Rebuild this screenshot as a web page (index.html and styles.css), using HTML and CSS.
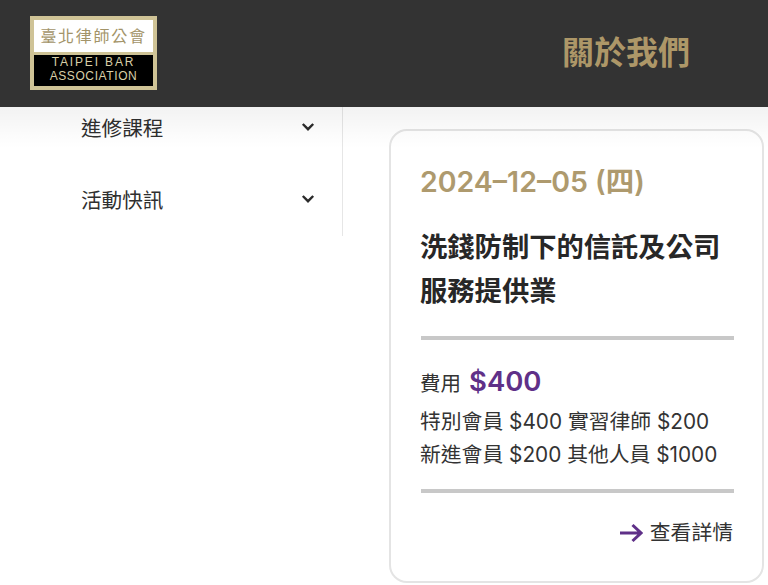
FILE: index.html
```html
<!DOCTYPE html>
<html lang="zh-Hant">
<head>
<meta charset="utf-8">
<title>臺北律師公會</title>
<link rel="stylesheet" href="styles.css">
</head>
<body>
<header class="site-header">
  <div class="logo">
    <div class="logo-top">臺北律師公會</div>
    <div class="logo-bottom"><span class="logo-l1">TAIPEI BAR</span><span class="logo-l2">ASSOCIATION</span></div>
  </div>
  <div class="page-title">關於我們</div>
</header>
<main class="main">
  <nav class="side">
    <div class="side-item"><span>進修課程</span>
      <svg class="chev" viewBox="0 0 14 10"><path d="M1.8 2 7 7.2 12.2 2"/></svg></div>
    <div class="side-item"><span>活動快訊</span>
      <svg class="chev" viewBox="0 0 14 10"><path d="M1.8 2 7 7.2 12.2 2"/></svg></div>
  </nav>
  <section class="content">
    <article class="card">
      <div class="date">2024–12–05 (四)</div>
      <h2 class="title">洗錢防制下的信託及公司服務提供業</h2>
      <div class="rule rule-a"></div>
      <div class="fee"><span class="fee-label">費用</span><span class="fee-value">$400</span></div>
      <div class="price price-first">特別會員 $400 實習律師 $200</div>
      <div class="price">新進會員 $200 其他人員 $1000</div>
      <div class="rule rule-b"></div>
      <div class="more">
        <svg class="arrow" viewBox="0 0 24 20"><path d="M1 10H22M13.5 2 22 10 13.5 18"/></svg>
        <span>查看詳情</span>
      </div>
    </article>
  </section>
</main>
</body>
</html>
```

FILE: styles.css
```css
* { box-sizing: border-box; }
html, body { margin: 0; height: 585px; overflow: hidden; background: #fff; }
body { font-family: Inter, "Noto Sans CJK TC", sans-serif; color: #2b2b2b; }

.site-header {
  height: 107px;
  background: #333333;
  display: flex;
  align-items: flex-start;
  padding: 16px 0 0 30px;
}
.logo {
  width: 127px;
  height: 74px;
  border: 4px solid #cfc396;
  display: flex;
  flex-direction: column;
}
.logo-top {
  height: 35px;
  background: #fff;
  color: #a39469;
  font: 16px/31px "Noto Sans CJK TC", sans-serif;
  letter-spacing: 1.7px;
  text-align: center;
  white-space: nowrap;
  border-bottom: 3px solid #cfc396;
  flex: none;
}
.logo-bottom {
  flex: 1;
  background: #000;
  color: #d8cfa8;
  display: flex;
  flex-direction: column;
  align-items: center;
  font-family: "Liberation Sans", sans-serif;
  font-size: 12px;
  line-height: 13.8px;
  padding-top: 1px;
  overflow: hidden;
}
.logo-l1 { letter-spacing: 1.85px; }
.logo-l2 { letter-spacing: .6px; }
.page-title {
  margin: 16px 0 0 405px;
  color: #ad9768;
  font: 700 32px/36px "Noto Sans CJK TC", sans-serif;
  white-space: nowrap;
}

.main { display: flex; position: relative; align-items: flex-start; }
.main::before {
  content: "";
  position: absolute;
  z-index: 2;
  left: 0; right: 0; top: 0;
  height: 42px;
  background: linear-gradient(rgba(0,0,0,.05), rgba(0,0,0,.012) 70%, rgba(0,0,0,0));
  pointer-events: none;
}
.side {
  width: 343px;
  height: 129px;
  border-right: 1px solid #e6e6e6;
  padding: 0 27px 0 81px;
  flex: none;
}
.side-item {
  height: 72px;
  display: flex;
  align-items: center;
  justify-content: space-between;
  font-size: 20.6px;
  color: #2f2f2f;
  margin-top: -16px;
  margin-bottom: 16px;
}
.chev { width: 14px; height: 10px; }
.chev path { fill: none; stroke: #2b2b2b; stroke-width: 2.4; }

.content { padding: 22px 0 0 46px; flex: 1; }
.card {
  width: 375px;
  height: 454px;
  background: #fff;
  border: 2px solid #e4e4e4;
  border-radius: 18px;
  padding: 31px 30px 0 29px;
}
.date {
  font-size: 28.5px;
  line-height: 40px;
  font-weight: 600;
  color: #ae9a6e;
  white-space: nowrap;
}
.title {
  margin: 24px 0 0;
  font-size: 27.3px;
  line-height: 44px;
  font-weight: 700;
  color: #272727;
}
.rule { height: 4px; background: #c8c8c8; width: 313px; margin-left: 1px; }
.rule-a { margin-top: 22px; }
.rule-b { margin-top: 18px; }
.fee { display: flex; align-items: baseline; gap: 8px; margin-top: 18px; height: 46px; line-height: 46px; }
.fee-label { font-size: 20.5px; color: #333; }
.fee-value { font-size: 27.5px; font-weight: 600; color: #5f3088; }
.price { font-size: 20.8px; line-height: 33px; color: #333; white-space: nowrap; }
.price-first { margin-top: 1px; }
.more {
  display: flex;
  align-items: center;
  justify-content: flex-end;
  gap: 7px;
  width: 313px;
  margin-top: 20px;
  font-size: 20.8px;
  line-height: 40px;
  color: #333;
}
.arrow { width: 24px; height: 20px; }
.arrow path { fill: none; stroke: #5f3088; stroke-width: 3; }
```
